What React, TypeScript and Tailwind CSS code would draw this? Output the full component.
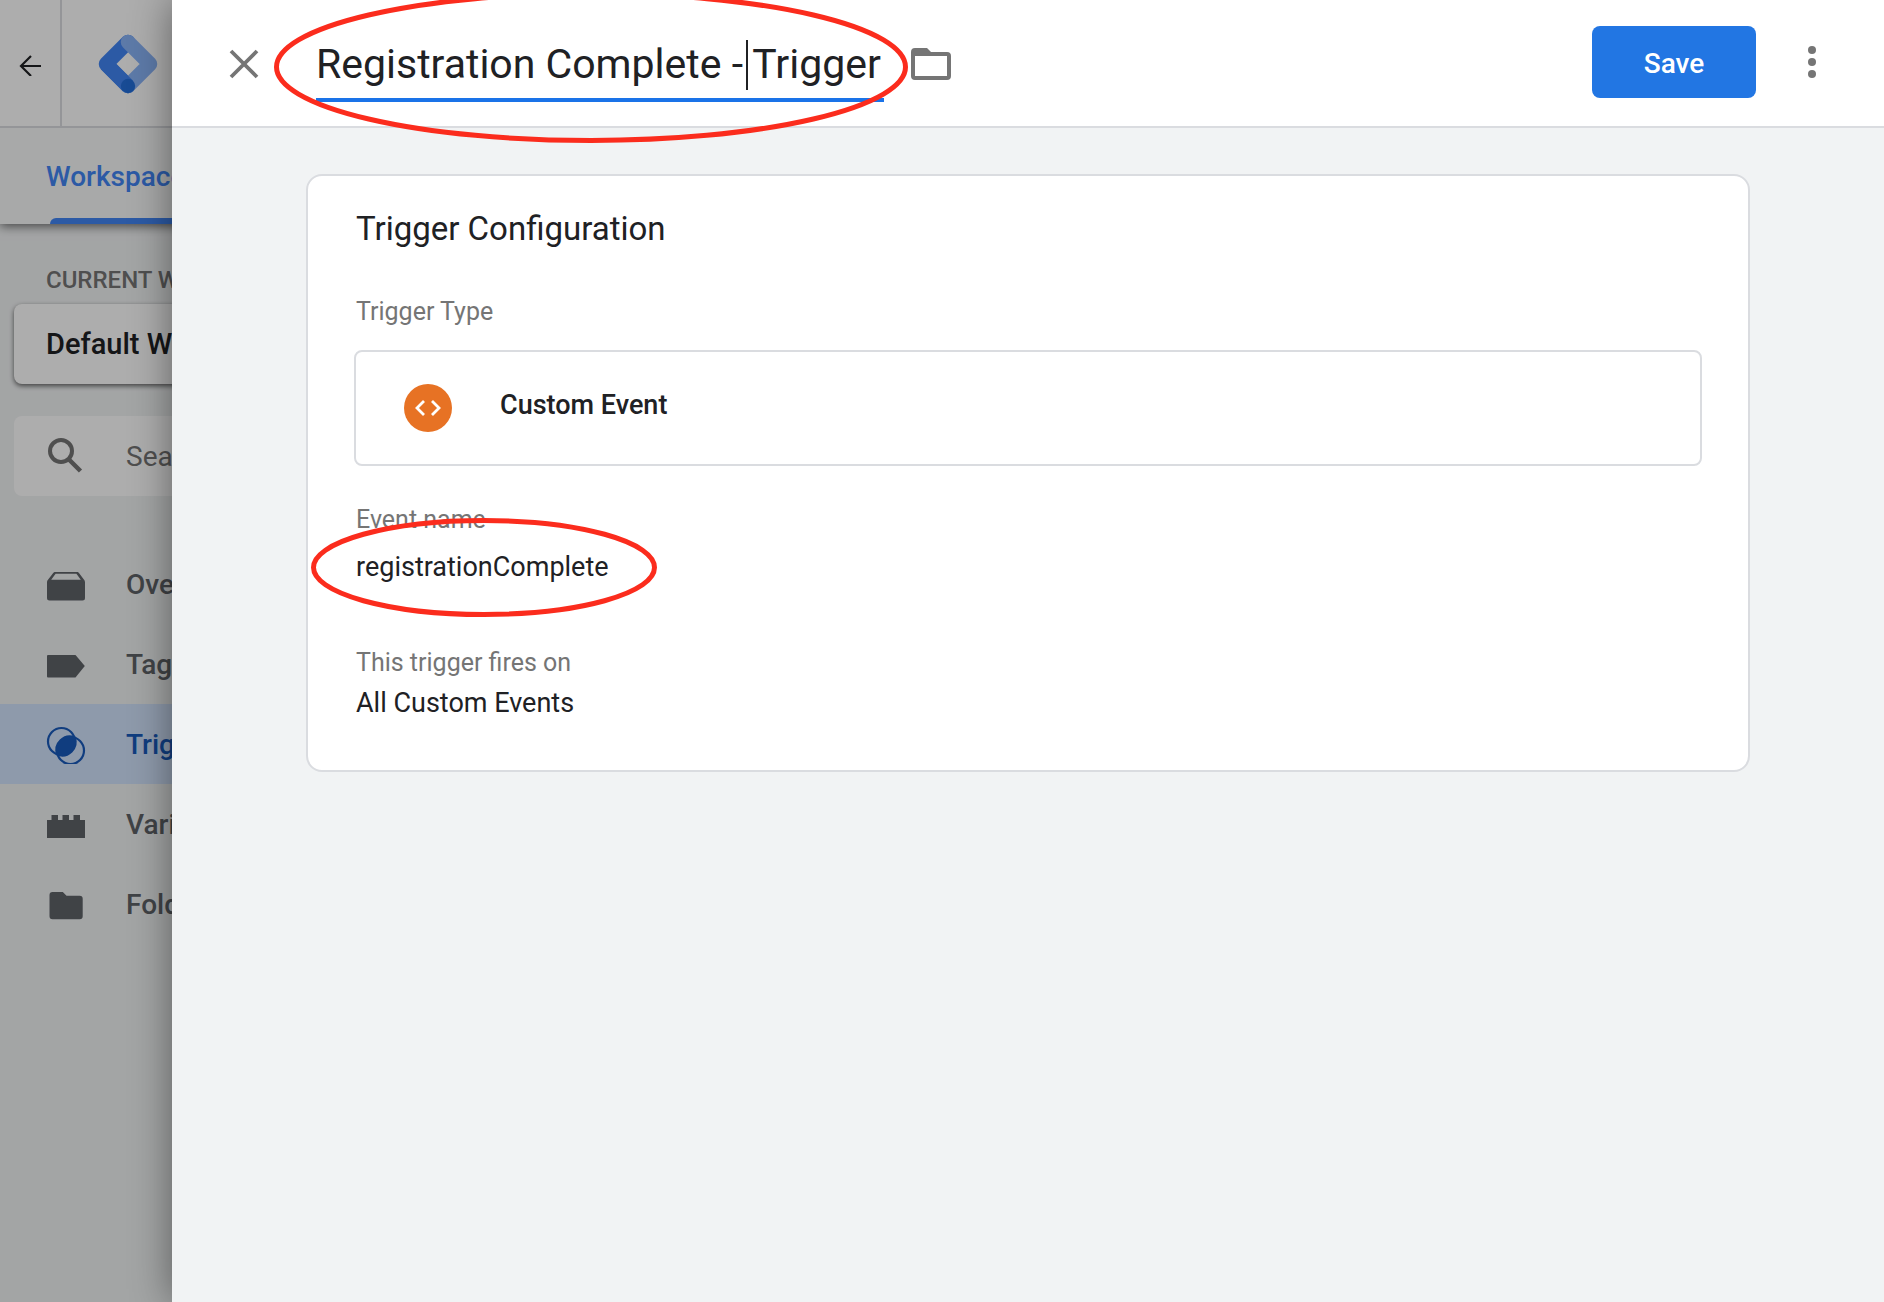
import React, { useState } from 'react';

type NavItem = {
  label: string;
  icon: React.ReactNode;
  active?: boolean;
};

const NAV_ITEMS: NavItem[] = [
  {
    label: 'Overview',
    icon: (
      <svg className="w-10 h-10" viewBox="0 0 40 40" fill="currentColor">
        <path fillRule="evenodd" d="M8.5 8h23.2l1.1.7L38.600 16.500 39 18v16a2.500 2.500 0 0 1-2.500 2.500h-33A2.500 2.500 0 0 1 1 34V18l.4-1.500L7.400 8.700zM9.600 9.800 5.200 15.800h29.600L30.400 9.800z" />
      </svg>
    ),
  },
  {
    label: 'Tags',
    icon: (
      <svg className="w-10 h-10" viewBox="0 0 40 40" fill="currentColor">
        <path d="M2 11h27.500L38.800 22 29.500 33.400H2a1 1 0 0 1-1-1V12a1 1 0 0 1 1-1z" />
      </svg>
    ),
  },
  {
    label: 'Triggers',
    active: true,
    icon: (
      <svg className="w-10 h-10" viewBox="0 0 40 40" fill="none" stroke="currentColor" strokeWidth={2.2}>
        <circle cx="15.500" cy="17.500" r="13.500" />
        <circle cx="24.500" cy="26.500" r="13.500" />
        <path fill="currentColor" stroke="none" d="M29.600 12.700A14.500 14.500 0 0 1 10.400 31.300 14.500 14.500 0 0 1 29.600 12.700z" />
      </svg>
    ),
  },
  {
    label: 'Variables',
    icon: (
      <svg className="w-10 h-10" viewBox="0 0 40 40" fill="currentColor">
        <path d="M1 16h4.500v-5h6.500v5h4.500v-5H23v5h4.500v-5H34v5h5v18H1z" />
      </svg>
    ),
  },
  {
    label: 'Folders',
    icon: (
      <svg className="w-10 h-10" viewBox="0 0 40 40" fill="currentColor">
        <path d="M6.500 8h10.300l3.700 3.800h13.200a3 3 0 0 1 3 3v17.400a3 3 0 0 1-3 3H6.500a3 3 0 0 1-3-3V11a3 3 0 0 1 3-3z" />
      </svg>
    ),
  },
];

function TagManagerLogo() {
  return (
    <svg className="w-[60px] h-[60px] shrink-0" viewBox="0 0 60 60" fill="none" strokeWidth={14.500} strokeLinecap="round" strokeLinejoin="round">
      <path stroke="#4285f4" d="M30 8 8 30l22 22" />
      <path stroke="#8ab4f8" d="M30 8l22 22-22 22" />
      <path stroke="#4285f4" strokeLinecap="butt" d="M8 30l22 22" />
      <circle cx="30" cy="52" r="7.200" fill="#246fdb" />
    </svg>
  );
}

function Sidebar() {
  return (
    <div className="min-h-screen flex flex-col">
      <div className="relative shadow-[0_2px_10px_rgba(0,0,0,0.6)]">
        <header className="h-32 flex bg-white border-b-2 border-[#dadce0]">
          <button aria-label="Back" className="w-[62px] pt-0.5 flex items-center justify-center border-r-2 border-[#dadce0] text-[#202124]">
            <svg className="w-6 h-6" viewBox="0 0 24 24" fill="none" stroke="currentColor" strokeWidth={2.2}>
              <path d="M23 14H4M13 4 3 14l10 10" />
            </svg>
          </button>
          <div className="flex items-center pl-9 pt-0.5">
            <TagManagerLogo />
          </div>
        </header>
        <nav className="h-24 bg-[#f8f9fa] pl-[46px] flex">
          <a href="#workspace" className="relative flex items-center pt-0.5 text-[28px] font-medium text-[#4285f4]">
            Workspace
            <span className="absolute left-1 right-0 bottom-0 h-1.5 rounded-t-md bg-[#4285f4]" />
          </a>
        </nav>
      </div>

      <div className="w-[500px] pl-3.5 pt-10">
        <p className="pl-8 text-[24px] leading-8 font-medium text-[#757575] whitespace-nowrap">CURRENT WORKSPACE</p>
        <button className="mt-2 w-full h-20 rounded-lg bg-white pl-8 pt-0.5 text-left text-[29px] font-medium text-[#202124] shadow-[0_2px_5px_rgba(0,0,0,0.6)]">
          Default Workspace
        </button>
        <label className="mt-8 h-20 rounded-lg bg-white flex items-center pl-8">
          <svg className="w-10 h-10 mr-10 text-[#757575]" viewBox="0 0 40 40" fill="none" stroke="currentColor">
            <circle cx="15" cy="15" r="11" strokeWidth={4} />
            <path strokeWidth={4.500} d="M23 23.500 34.500 35" />
          </svg>
          <input
            type="search"
            aria-label="Search"
            placeholder="Search"
            className="w-60 pt-0.5 bg-transparent outline-none text-[28px] placeholder:text-[#757575]"
          />
        </label>
      </div>

      <nav className="mt-12">
        {NAV_ITEMS.map((item) => (
          <a
            key={item.label}
            href={`#${item.label.toLowerCase()}`}
            className={`h-20 pl-[46px] flex items-center gap-10 text-[28px] font-medium ${item.active ? 'bg-[#d2e3fc] text-[#185abc]' : 'text-[#5f6368]'}`}
          >
            {item.icon}
            <span className="pt-0.5">{item.label}</span>
          </a>
        ))}
      </nav>
    </div>
  );
}

function SheetHeader() {
  const [name, setName] = useState('Registration Complete - Trigger');

  return (
    <header className="relative h-32 shrink-0 flex items-center justify-between bg-white border-b-2 border-[#dadce0] pl-14 pr-[60px]">
      <div className="flex items-center pt-0.5">
        <button aria-label="Close" className="text-[#757575]">
          <svg className="w-8 h-8" viewBox="0 0 32 32" fill="none" stroke="currentColor" strokeWidth={3.800}>
            <path d="M3 3l26 26M29 3 3 29" />
          </svg>
        </button>

        <div className="relative ml-14">
          <input
            aria-label="Trigger name"
            value={name}
            onChange={(e) => setName(e.target.value)}
            className="block w-[568px] h-[76px] pt-1 border-b-4 border-[#1a73e8] bg-transparent outline-none text-[41px] text-[#202124] caret-transparent"
          />
          <span className="absolute left-[430px] top-3.5 w-0.5 h-[50px] bg-[#202124]" />
        </div>

        <button aria-label="Move to folder" className="ml-[27px] text-[#757575]">
          <svg className="w-10 h-8" viewBox="0 0 40 32" fill="currentColor">
            <path fillRule="evenodd" d="M4 0h12l4 4h16a4 4 0 0 1 4 4v20a4 4 0 0 1-4 4H4a4 4 0 0 1-4-4V4a4 4 0 0 1 4-4zM4 8v20h32V8z" />
          </svg>
        </button>
      </div>

      <div className="flex items-center gap-11 pb-0.5">
        <button className="w-[164px] h-[72px] pt-1 rounded-lg bg-[#2276e3] text-white text-[28px] font-medium">Save</button>
        <button aria-label="More actions" className="text-[#757575]">
          <svg className="w-6 h-8" viewBox="0 0 24 32" fill="currentColor">
            <circle cx="12" cy="4" r="4" />
            <circle cx="12" cy="16" r="4" />
            <circle cx="12" cy="28" r="4" />
          </svg>
        </button>
      </div>

      {/* Highlight around the trigger name */}
      <svg className="absolute left-[102px] top-[-9px] w-[634px] h-[152px] pointer-events-none" viewBox="0 0 634 152" fill="none">
        <ellipse cx="317" cy="76" rx="314.500" ry="73.500" stroke="#fb2c1d" strokeWidth={5} />
      </svg>
    </header>
  );
}

function TriggerCard() {
  return (
    <section className="rounded-2xl border-2 border-[#dadce0] bg-white px-[46px] pt-8 pb-[51px] text-[#202124]">
      <h2 className="pl-0.5 text-[33px] leading-[42px]">Trigger Configuration</h2>

      <h3 className="mt-[46px] pl-0.5 text-[25px] leading-8 text-[#757575]">Trigger Type</h3>
      <button className="mt-[22px] w-full h-[116px] rounded-lg border-2 border-[#dadce0] flex items-center pl-12">
        <span className="w-12 h-12 rounded-full bg-[#e77224] text-white flex items-center justify-center">
          <svg className="w-7 h-7" viewBox="0 0 28 28" fill="none" stroke="currentColor" strokeWidth={2.800}>
            <path d="M10 7 3 14l7 7M18 7l7 7-7 7" />
          </svg>
        </span>
        <span className="ml-12 pb-1.5 text-[27px] font-medium">Custom Event</span>
      </button>

      <div className="relative mt-[38px] pl-0.5">
        <h3 className="text-[25px] leading-8 text-[#757575]">Event name</h3>
        <p className="mt-[15px] text-[27px] leading-8">registrationComplete</p>

        {/* Highlight around the event name */}
        <svg className="absolute left-[-43px] top-[14px] w-[346px] h-[99px] pointer-events-none" viewBox="0 0 346 99" fill="none">
          <ellipse cx="173" cy="49.500" rx="170.500" ry="47" stroke="#fb2c1d" strokeWidth={5} />
        </svg>
      </div>

      <h3 className="mt-16 pl-0.5 text-[25px] leading-8 text-[#757575]">This trigger fires on</h3>
      <p className="mt-2 pl-0.5 text-[27px] leading-8">All Custom Events</p>
    </section>
  );
}

function App() {
  return (
    <div className="relative h-screen overflow-hidden bg-[#f1f3f4] font-[Roboto,sans-serif]">
      <Sidebar />

      {/* Scrim */}
      <div className="absolute inset-0 bg-black/32" />

      <main className="absolute inset-y-0 right-0 left-[172px] flex flex-col bg-[#f1f3f4] shadow-[0_0_38px_rgba(0,0,0,0.45)]">
        <SheetHeader />
        <div className="px-[134px] pt-[46px]">
          <TriggerCard />
        </div>
      </main>
    </div>
  );
}

export default App;
